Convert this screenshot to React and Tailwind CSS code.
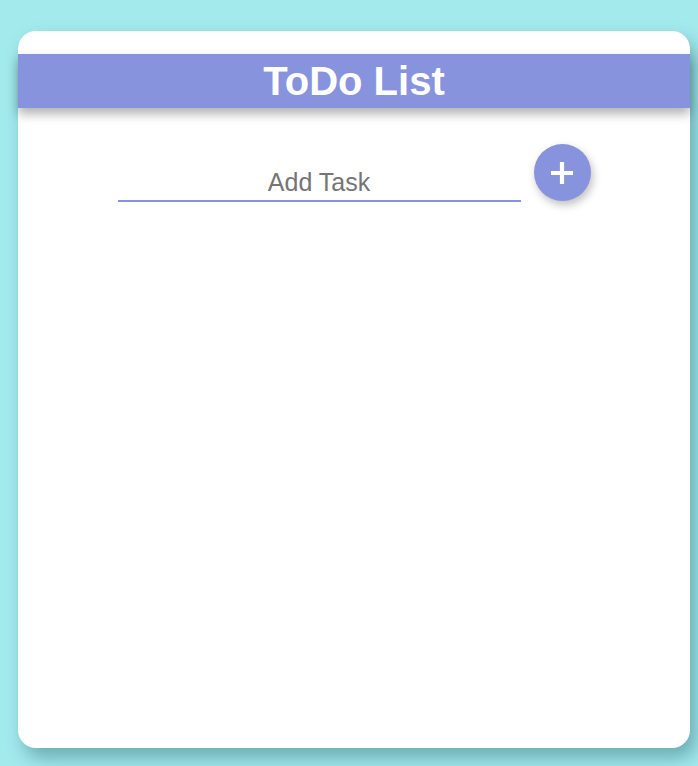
export default function App() {
  return (
    <div className="min-h-screen bg-[#a3eaed] pt-[31px] pb-[18px] font-['Liberation_Sans',Arial,sans-serif]">
      <div className="ml-[18px] flex h-[717px] w-[672px] flex-col rounded-[18px] bg-white pt-[23px] shadow-[6px_10px_18px_rgba(0,60,70,0.35)]">
        <header className="flex h-[54px] items-center justify-center bg-[#8793dd] shadow-[0_6px_10px_rgba(0,0,0,0.3)]">
          <h1 className="m-0 text-[40px] font-bold leading-none text-white">ToDo List</h1>
        </header>

        <div className="mt-[36px] flex items-end justify-center gap-[13px]">
          <input
            type="text"
            placeholder="Add Task"
            className="mb-[-1px] h-[42px] w-[403px] border-0 border-b-2 border-[#8793dd] bg-transparent pt-[4px] text-center text-[25px] text-[#333] outline-none placeholder:text-[#757575]"
          />
          <button className="flex h-[57px] w-[57px] items-center justify-center rounded-full bg-[#8793dd] shadow-[2px_4px_8px_rgba(0,0,0,0.25)]">
            <svg width="26" height="26" viewBox="0 0 26 26">
              <path d="M13 2v22M2 13h22" stroke="white" strokeWidth="4.2" />
            </svg>
          </button>
        </div>
      </div>
    </div>
  );
}
